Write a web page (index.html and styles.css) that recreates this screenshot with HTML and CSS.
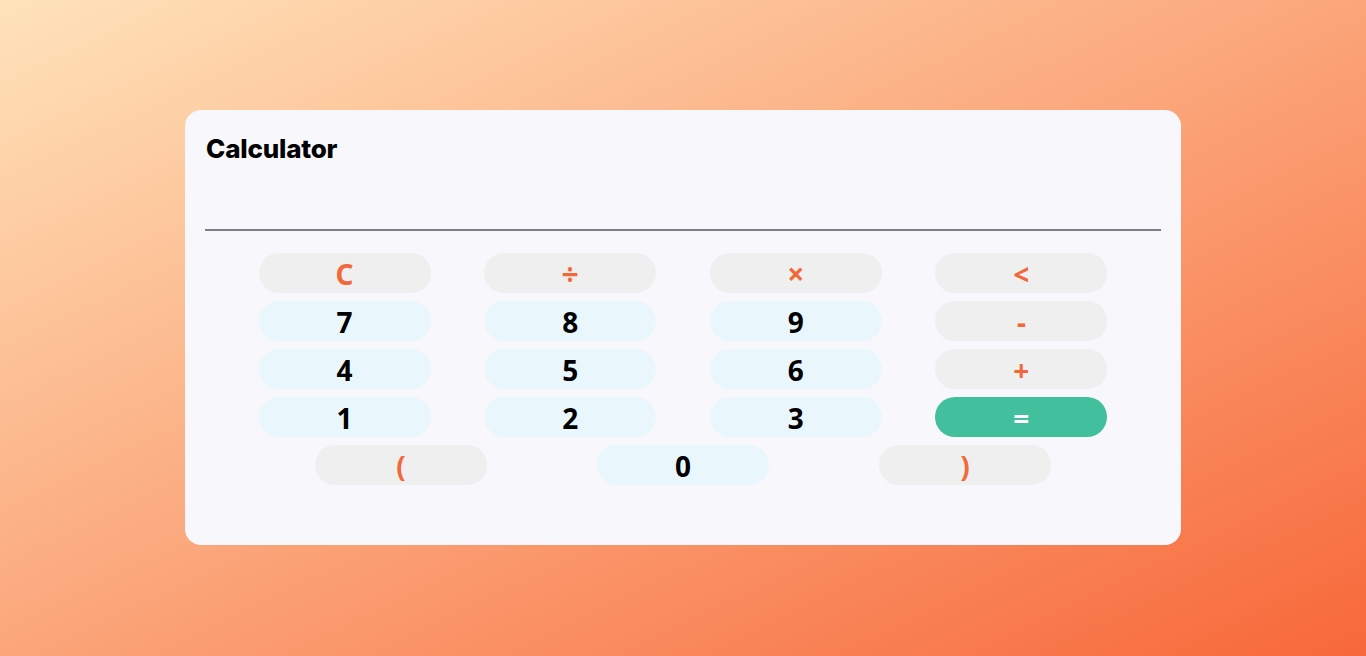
FILE: index.html
```html
<!DOCTYPE html>
<html lang="en">
<head>
<meta charset="utf-8">
<title>Calculator</title>
<link rel="stylesheet" href="styles.css">
</head>
<body>
<main class="page">
  <section class="card">
    <h1 class="title">Calculator</h1>
    <div class="display"></div>
    <div class="keys">
      <div class="row">
        <button class="key op">C</button>
        <button class="key op sym">÷</button>
        <button class="key op sym">×</button>
        <button class="key op">&lt;</button>
      </div>
      <div class="row">
        <button class="key num">7</button>
        <button class="key num">8</button>
        <button class="key num">9</button>
        <button class="key op">-</button>
      </div>
      <div class="row">
        <button class="key num">4</button>
        <button class="key num">5</button>
        <button class="key num">6</button>
        <button class="key op">+</button>
      </div>
      <div class="row">
        <button class="key num">1</button>
        <button class="key num">2</button>
        <button class="key num">3</button>
        <button class="key eq">=</button>
      </div>
      <div class="row">
        <button class="key op">(</button>
        <button class="key num">0</button>
        <button class="key op">)</button>
      </div>
    </div>
  </section>
</main>
</body>
</html>
```

FILE: styles.css
```css
* { box-sizing: border-box; }

html, body {
  margin: 0;
  height: 100%;
}

body {
  background: linear-gradient(to bottom right, #ffe3ba, #f7683a);
  font-family: "Noto Sans", "Open Sans", sans-serif;
}

.page {
  height: 656px;
  display: flex;
  align-items: center;
  justify-content: center;
}

.card {
  width: 996px;
  height: 435px;
  margin-top: -1px;
  background: #f8f8fc;
  border-radius: 16px;
  padding: 20px;
}

.title {
  margin: 4px 0 0 1px;
  font-family: "Inter", "Lato", sans-serif;
  font-weight: 800;
  font-size: 26px;
  line-height: 30px;
  letter-spacing: -0.2px;
  color: #000;
}

.display {
  height: 67px;
  border-bottom: 2px solid #7e7e88;
}

.keys {
  margin-top: 22px;
  display: flex;
  flex-direction: column;
  gap: 8px;
}

.row {
  display: flex;
  justify-content: space-evenly;
}

.key {
  width: 172px;
  height: 40px;
  border: none;
  border-radius: 20px;
  padding: 2px 0 0;
  font-family: "Noto Sans", "Open Sans", sans-serif;
  font-weight: 700;
  font-size: 28px;
  line-height: 38px;
  text-align: center;
}

.op {
  background: #efefef;
  color: #f2683a;
}

.op.sym {
  font-size: 30px;
}

.num {
  background: #e9f7fc;
  color: #000;
}

.eq {
  background: #42bf9c;
  color: #fff;
}
```
